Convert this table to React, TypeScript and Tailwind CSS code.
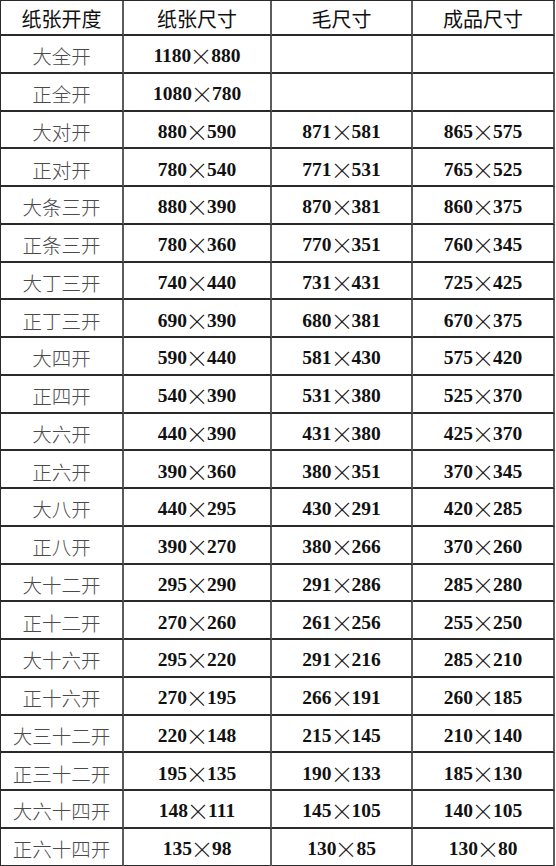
import React from 'react';

type Row = [string, string, string, string];

const rows: Row[] = [
    ['大全开', '1180×880', '', ''],
    ['正全开', '1080×780', '', ''],
    ['大对开', '880×590', '871×581', '865×575'],
    ['正对开', '780×540', '771×531', '765×525'],
    ['大条三开', '880×390', '870×381', '860×375'],
    ['正条三开', '780×360', '770×351', '760×345'],
    ['大丁三开', '740×440', '731×431', '725×425'],
    ['正丁三开', '690×390', '680×381', '670×375'],
    ['大四开', '590×440', '581×430', '575×420'],
    ['正四开', '540×390', '531×380', '525×370'],
    ['大六开', '440×390', '431×380', '425×370'],
    ['正六开', '390×360', '380×351', '370×345'],
    ['大八开', '440×295', '430×291', '420×285'],
    ['正八开', '390×270', '380×266', '370×260'],
    ['大十二开', '295×290', '291×286', '285×280'],
    ['正十二开', '270×260', '261×256', '255×250'],
    ['大十六开', '295×220', '291×216', '285×210'],
    ['正十六开', '270×195', '266×191', '260×185'],
    ['大三十二开', '220×148', '215×145', '210×140'],
    ['正三十二开', '195×135', '190×133', '185×130'],
    ['大六十四开', '148×111', '145×105', '140×105'],
    ['正六十四开', '135×98', '130×85', '130×80'],
];

const cjk = "font-['Noto_Sans_CJK_SC',sans-serif]";
const cell = 'flex items-center justify-center border-r-2 border-b-2 border-r-[#5c5c5c] border-b-[#2a2a2a]';

function Size({ value }: { value: string }) {
    if (!value) return null;
    const [a, b] = value.split('×');
    return (
        <span className="flex items-center font-['Liberation_Serif',serif] font-bold text-[19.5px] leading-[22px] text-[#111] pt-[5px]">
            <span>{a}</span>
            <span className={`${cjk} w-[20px] text-center font-light text-[20px] leading-[22px] scale-115`}>×</span>
            <span>{b}</span>
        </span>
    );
}

export default function App() {
    return (
        <div className="w-[556px] h-[866px] overflow-hidden bg-white">
            <div className="w-[555px] border-t border-l border-[#2a2a2a]">
                <div className="grid grid-cols-[123px_148px_141px_142px] h-[35px]">
                    {['纸张开度', '纸张尺寸', '毛尺寸', '成品尺寸'].map((h) => (
                        <div key={h} className={`${cell} ${cjk} text-[20px] leading-[24px] text-[#111] pt-[2px]`}>{h}</div>
                    ))}
                </div>
                {rows.map((r) => (
                    <div key={r[0]} className="grid grid-cols-[123px_148px_141px_142px] h-[37.76px]">
                        <div className={`${cell} ${cjk} font-light text-[19.5px] leading-[24px] text-[#4a4a4a] pt-[5px]`}>{r[0]}</div>
                        <div className={cell}><Size value={r[1]} /></div>
                        <div className={cell}><Size value={r[2]} /></div>
                        <div className={cell}><Size value={r[3]} /></div>
                    </div>
                ))}
            </div>
        </div>
    );
}
